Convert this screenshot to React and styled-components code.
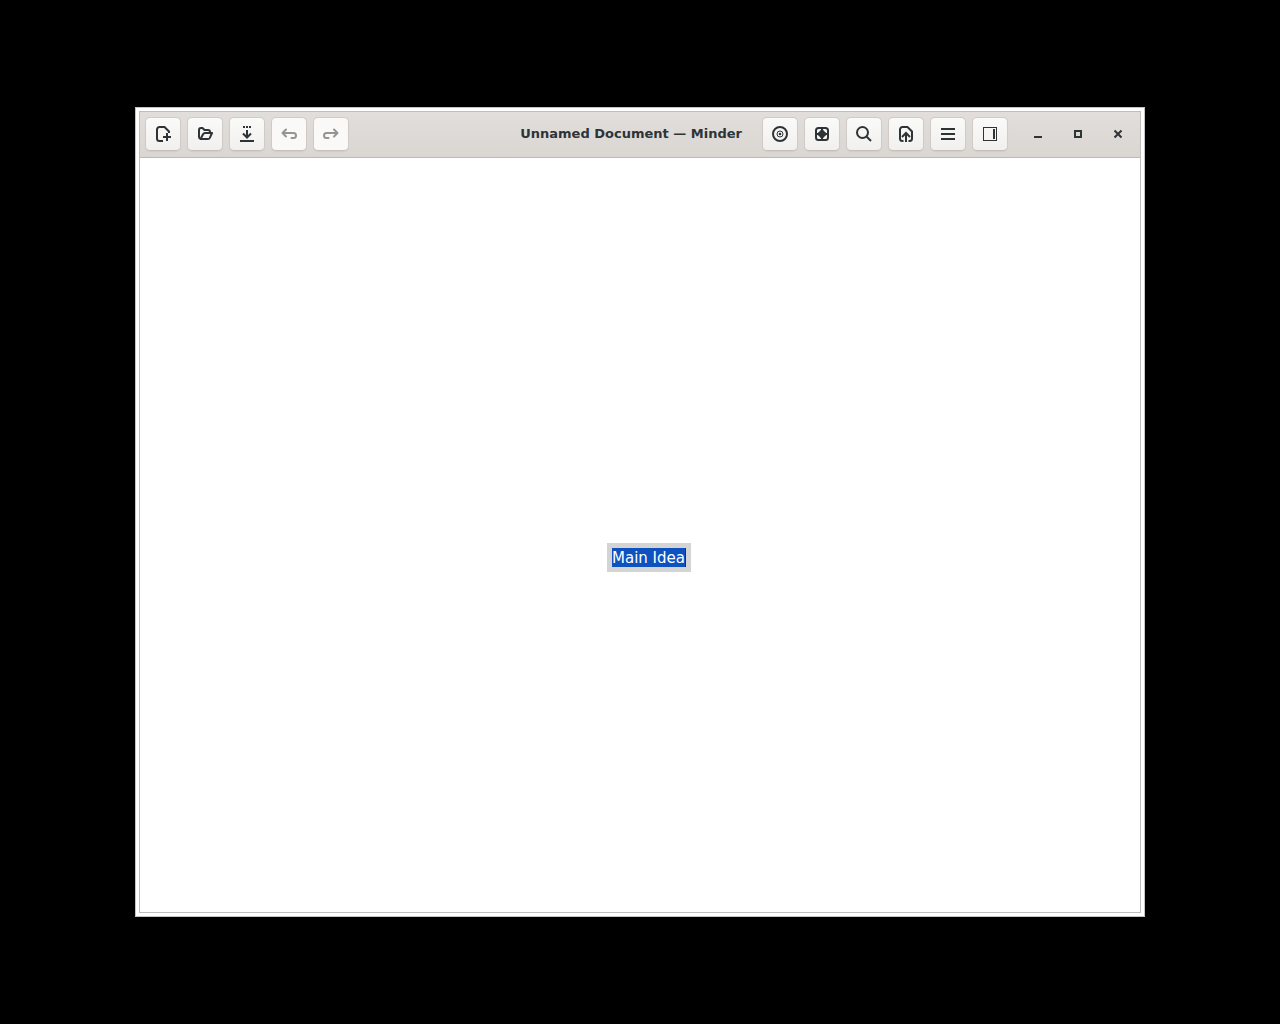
import React, { useState } from "react";
import styled, { createGlobalStyle } from "styled-components";

const GlobalStyle = createGlobalStyle`
  *, *::before, *::after { box-sizing: border-box; }
  body { margin: 0; background: #000; font-family: "DejaVu Sans", sans-serif; }
`;

const Desktop = styled.div`
  display: flex;
  min-height: 100vh;
  padding: 107px 135px;
  background: #000;
`;

const Frame = styled.div`
  display: flex;
  flex: 1;
  padding: 3px;
  border: 1px solid #c4c4c4;
  background: #fff;
`;

const Window = styled.main`
  display: flex;
  flex: 1;
  flex-direction: column;
  border: 1px solid #bfbebd;
`;

const HeaderBar = styled.header`
  display: flex;
  align-items: center;
  padding: 5px 5px 6px;
  border-bottom: 1px solid #bfb8b1;
  background: linear-gradient(to bottom, #e1dedb, #dad6d2);
`;

const Group = styled.div`
  display: flex;
  gap: 6px;
`;

const Title = styled.h1`
  flex: 1;
  margin: 0;
  padding-right: 20px;
  overflow: hidden;
  color: #2e3436;
  font-size: 13px;
  font-weight: bold;
  line-height: 16px;
  text-align: right;
  white-space: nowrap;
`;

const ToolButton = styled.button`
  display: grid;
  place-items: center;
  width: 36px;
  height: 34px;
  padding: 0;
  border: 1px solid #d0cbc6;
  border-bottom-color: #c5c0bb;
  border-radius: 5px;
  background: linear-gradient(to bottom, #fafaf9, #f1f0ee);
  box-shadow: 0 1px 1px rgba(0, 0, 0, 0.05);
  color: #2e3436;

  &:disabled {
    background: #faf9f8;
    color: #929595;
  }
`;

const WindowControls = styled(Group)`
  margin-left: 13px;
`;

const WindowButton = styled.button`
  display: grid;
  place-items: center;
  width: 34px;
  height: 34px;
  padding: 0;
  border: 0;
  background: transparent;
  color: #2e3436;
`;

const Glyph = styled.svg`
  display: block;
  width: 16px;
  height: 16px;
  fill: none;
  stroke: currentColor;
  stroke-width: 2;
`;

const Canvas = styled.section`
  position: relative;
  flex: 1;
  background: #fff;
`;

const Node = styled.div`
  position: absolute;
  top: 385px;
  left: 467px;
  padding: 5px;
  background: #d4d4d4;
`;

const NodeInput = styled.input`
  display: block;
  field-sizing: content;
  height: 19px;
  padding: 1px 0 0;
  border: 0;
  border-right: 1px solid #123466;
  outline: 0;
  background: #0d52bf;
  color: #fff;
  font-family: "DejaVu Sans", sans-serif;
  font-size: 15px;
  line-height: 18px;
`;

const icons = {
  create: (
    <>
      <path d="M8 15H4.500A2.500 2.500 0 0 1 2 12.500V3.500A2.500 2.500 0 0 1 4.500 1H9.500L14 5.500V7" strokeLinejoin="round" />
      <path d="M12 7v8M8 11h8" />
    </>
  ),
  open: (
    <path
      d="M3.500 13A2 2 0 0 1 2 11V4a2 2 0 0 1 2-2h1.500l2 2H11a2 2 0 0 1 2 2v1M3.500 13H11a2 2 0 0 0 1.800-1.100L15 7H8a2 2 0 0 0-1.800 1.100z"
      strokeLinejoin="round"
    />
  ),
  save: (
    <>
      <path d="M1 15h14M8 4v8M4 7.500l4 4 4-4" />
      <path d="M4 1h2M7 1h2M10 1h2" />
    </>
  ),
  undo: <path d="M5 3.500L1.500 7 5 10.500M2 7h10.500a2.500 2.500 0 0 1 0 5h-2" strokeLinecap="round" strokeLinejoin="round" />,
  redo: <path d="M11 3.500L14.500 7 11 10.500M14 7H3.500a2.500 2.500 0 0 0 0 5h2" strokeLinecap="round" strokeLinejoin="round" />,
  focus: (
    <>
      <circle cx="8" cy="8" r="7" />
      <circle cx="8" cy="8" r="3" strokeWidth="1" />
      <circle cx="8" cy="8" r="1.300" fill="currentColor" stroke="none" />
    </>
  ),
  fit: (
    <>
      <rect x="2" y="2" width="12" height="12" rx="2.500" />
      <path d="M8 2v12M2 8h12" />
      <path d="M8 2.500L10.500 5.500 13.500 8 10.500 10.500 8 13.500 5.500 10.500 2.500 8 5.500 5.500z" fill="currentColor" stroke="none" />
    </>
  ),
  search: (
    <>
      <circle cx="6.500" cy="6.500" r="5.500" />
      <path d="M10.500 10.500l4.500 4.500" />
    </>
  ),
  share: (
    <>
      <path d="M5.500 15H4.500A2.500 2.500 0 0 1 2 12.500V3.500A2.500 2.500 0 0 1 4.500 1H9.500L14 5.500v7a2.500 2.500 0 0 1-2.500 2.500h-1" strokeLinejoin="round" />
      <path d="M8 16V7.500M4 11l4-4 4 4" />
    </>
  ),
  menu: <path d="M1 3h14M1 8h14M1 13h14" />,
  sidebar: (
    <>
      <rect x="1.500" y="1.500" width="13" height="13" strokeWidth="1" />
      <path d="M12 3v10" />
    </>
  ),
  minimize: <path d="M4 11h8" />,
  maximize: <rect x="5" y="5" width="6" height="6" />,
  close: <path d="M4.500 4.500l7 7M11.500 4.500l-7 7" />,
};

const fileActions = [
  { icon: "create", label: "New document" },
  { icon: "open", label: "Open document" },
  { icon: "save", label: "Save document" },
  { icon: "undo", label: "Undo", disabled: true },
  { icon: "redo", label: "Redo", disabled: true },
];

const viewActions = [
  { icon: "focus", label: "Focus mode" },
  { icon: "fit", label: "Zoom" },
  { icon: "search", label: "Search" },
  { icon: "share", label: "Export" },
  { icon: "menu", label: "Menu" },
  { icon: "sidebar", label: "Toggle sidebar" },
];

const windowActions = [
  { icon: "minimize", label: "Minimize" },
  { icon: "maximize", label: "Maximize" },
  { icon: "close", label: "Close" },
];

function Icon({ name }) {
  return (
    <Glyph viewBox="0 0 16 16" aria-hidden="true">
      {icons[name]}
    </Glyph>
  );
}

function Actions({ items }) {
  return (
    <Group>
      {items.map(({ icon, label, disabled }) => (
        <ToolButton key={icon} type="button" aria-label={label} disabled={disabled}>
          <Icon name={icon} />
        </ToolButton>
      ))}
    </Group>
  );
}

export default function App() {
  const [idea, setIdea] = useState("Main Idea");

  return (
    <>
      <GlobalStyle />
      <Desktop>
        <Frame>
          <Window>
            <HeaderBar>
              <Actions items={fileActions} />
              <Title>Unnamed Document — Minder</Title>
              <Actions items={viewActions} />
              <WindowControls>
                {windowActions.map(({ icon, label }) => (
                  <WindowButton key={icon} type="button" aria-label={label}>
                    <Icon name={icon} />
                  </WindowButton>
                ))}
              </WindowControls>
            </HeaderBar>
            <Canvas>
              <Node>
                <NodeInput
                  aria-label="Node name"
                  value={idea}
                  onChange={(event) => setIdea(event.target.value)}
                />
              </Node>
            </Canvas>
          </Window>
        </Frame>
      </Desktop>
    </>
  );
}
